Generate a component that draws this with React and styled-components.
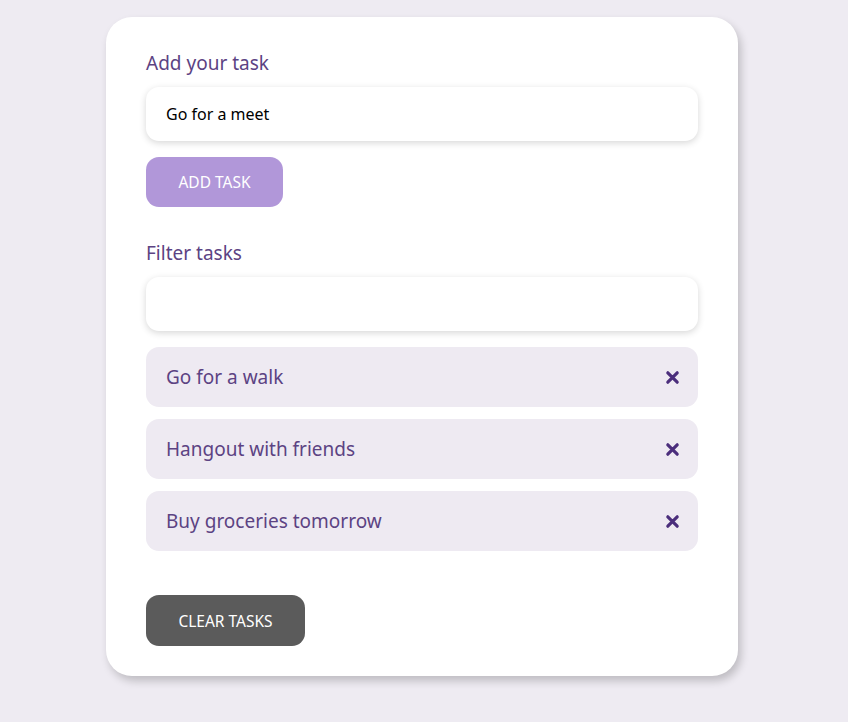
import styled, { createGlobalStyle } from "styled-components";

const GlobalStyle = createGlobalStyle`
  body {
    margin: 0;
    background: #eeebf2;
    font-family: "Noto Sans", "Open Sans", sans-serif;
  }
`;

const tasks = ["Go for a walk", "Hangout with friends", "Buy groceries tomorrow"];

function App() {
  return (
    <Page>
      <GlobalStyle />
      <Card>
        <Label>Add your task</Label>
        <TextField defaultValue="Go for a meet" />
        <Button $bg="#b197d9">ADD TASK</Button>
        <Label $top>Filter tasks</Label>
        <TextField />
        <List>
          {tasks.map((t) => (
            <Item key={t}>
              <span>{t}</span>
              <Remove aria-label="remove">
                <svg width="15" height="15" viewBox="0 0 16 16">
                  <path d="M3 3 L13 13 M13 3 L3 13" stroke="#4b2e7c" strokeWidth="3.4" strokeLinecap="round" />
                </svg>
              </Remove>
            </Item>
          ))}
        </List>
        <Button $bg="#5b5b5b" $wide>CLEAR TASKS</Button>
      </Card>
    </Page>
  );
}

export default App;

const Page = styled.div`
  display: flex;
  justify-content: center;
  padding: 17px 4px 46px 0;
`;

const Card = styled.div`
  width: 632px;
  box-sizing: border-box;
  background: #fff;
  border-radius: 26px;
  padding: 34px 40px 30px;
  display: flex;
  flex-direction: column;
  align-items: flex-start;
  box-shadow: 3px 5px 8px rgba(0, 0, 0, 0.2);
`;

const Label = styled.div`
  font-size: 19px;
  line-height: 24px;
  color: #5c4383;
  margin-top: ${(p) => (p.$top ? "34px" : "0")};
  margin-bottom: 12px;
`;

const TextField = styled.input`
  width: 100%;
  height: 54px;
  box-sizing: border-box;
  border: none;
  outline: none;
  border-radius: 13px;
  padding: 0 20px;
  font-family: inherit;
  font-size: 16px;
  color: #000;
  background: #fff;
  box-shadow: 0 2px 7px rgba(0, 0, 0, 0.16);
`;

const Button = styled.button`
  margin-top: ${(p) => (p.$wide ? "44px" : "16px")};
  width: ${(p) => (p.$wide ? "159px" : "137px")};
  height: ${(p) => (p.$wide ? "51px" : "50px")};
  border: none;
  border-radius: 13px;
  background: ${(p) => p.$bg};
  color: #fff;
  font-family: inherit;
  font-size: 15.5px;
  cursor: pointer;
`;

const List = styled.div`
  width: 100%;
  margin-top: 16px;
  display: flex;
  flex-direction: column;
  gap: 12px;
`;

const Item = styled.div`
  height: 60px;
  box-sizing: border-box;
  background: #eeeaf2;
  border-radius: 13px;
  padding: 0 18px 0 20px;
  display: flex;
  align-items: center;
  justify-content: space-between;
  font-size: 19px;
  color: #5c4383;
`;

const Remove = styled.button`
  border: none;
  background: none;
  padding: 0;
  display: flex;
  cursor: pointer;
`;
